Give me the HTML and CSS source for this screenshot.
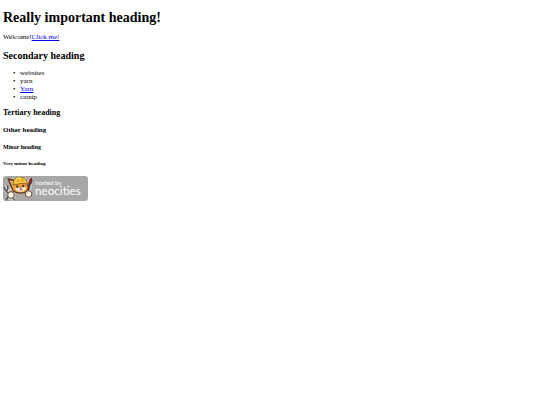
FILE: index.html
```html
<!DOCTYPE html>
<html lang="en">
<head>
    <meta charset="UTF-8">
    <meta name="viewport" content="width=device-width, initial-scale=1.0">
    <title>Really important heading!</title>
    <link rel="stylesheet" href="styles.css">
</head>
<body>

<h1>Really important heading!</h1>
<p>Welcome!<a href="#">Click me!</a></p>

<h2>Secondary heading</h2>
<ul>
    <li>websites</li>
    <li>yarn</li>
    <li><a href="#">Yarn</a></li>
    <li>catnip</li>
</ul>

<h3>Tertiary heading</h3>
<h4>Other heading</h4>
<h5>Minor heading</h5>
<h6>Very minor heading</h6>

<!-- Hosting badge -->
<a class="badge" href="#">
    <svg class="badge-art" viewBox="0 0 255 75" role="img" aria-label="Hosted by Neocities">
        <rect width="255" height="75" rx="9" fill="#a7a7a7"/>
        <!-- White edge behind the cat -->
        <path d="M2 30 L10 28 L18 36 L28 28 L20 8 L38 6 L48 1 L66 3 L74 12 L80 5 L88 3 L90 14 L84 42 L90 53 L84 65 L72 65 L66 52 L36 53 L37 68 L28 75 L12 68 L10 53 L2 44 Z" fill="#cfccc8"/>
        <!-- Wrench -->
        <path d="M3 31 L5 39 L12 48 L23 57 M13 29 L15 37 L11 45" fill="none" stroke="#47484e" stroke-width="4"/>
        <path d="M17 59 L9 73 M29 62 L34 72" stroke="#55504d" stroke-width="4"/>
        <!-- Head -->
        <path d="M27 36 L16 9 L38 14 Q51 6 69 14 L76 30 Q79 44 63 50 Q44 54 31 45 Z" fill="#f19a3b" stroke="#51331f" stroke-width="4"/>
        <path d="M20 14 L35 18 L30 27 Z" fill="#f3b681"/>
        <path d="M36 38 Q43 31 51 36 Q61 28 69 36 Q68 46 54 47 Q41 46 36 38 Z" fill="#fff2dd"/>
        <!-- Helmet -->
        <path d="M31 21 Q31 5 49 3 Q67 2 73 18 L77 24 Q56 19 31 27 Z" fill="#f5c53c" stroke="#654719" stroke-width="2"/>
        <path d="M43 6 L47 19 M56 4 L60 18" stroke="#c9942f" stroke-width="3"/>
        <path d="M39 9 Q46 4 52 6" fill="none" stroke="#ffe99b" stroke-width="3"/>
        <!-- Face -->
        <ellipse cx="43" cy="32" rx="3" ry="4" fill="#33251f"/>
        <ellipse cx="61" cy="30" rx="3" ry="4" fill="#33251f"/>
        <path d="M51 35 L57 35 L54 39 Z M48 41 Q54 46 60 39" fill="#a64330" stroke="#7b3d28" stroke-width="1"/>
        <!-- Brush -->
        <path d="M81 22 L74 49" stroke="#4c2a20" stroke-width="5"/>
        <path d="M78 22 Q77 10 86 5 Q90 14 84 24 Z" fill="#a32828" stroke="#48201f" stroke-width="2"/>
        <!-- Paws -->
        <path d="M29 44 L25 51 M67 42 L73 48" stroke="#d98535" stroke-width="7"/>
        <circle cx="24" cy="57" r="10" fill="#fff9ed" stroke="#644632" stroke-width="3"/>
        <circle cx="77" cy="54" r="10" fill="#fff3e0" stroke="#644632" stroke-width="3"/>
        <text class="badge-small" x="97" y="27">hosted by</text>
        <text class="badge-name" x="96" y="58">neocities</text>
    </svg>
</a>

</body>
</html>
```
FILE: styles.css
```css
body {
    margin: 10px 3px;
    font-family: "Liberation Serif", "Times New Roman", serif;
    font-size: 7px;
    line-height: 8px;
    background-color: white;
    color: black;
}
h1 {
    margin: 0 0 8px;
    font-size: 14px;
    line-height: 15px;
}
p {
    margin: 0 0 9px;
}
h2 {
    margin: 0 0 7px;
    font-size: 10px;
    line-height: 12px;
}
ul {
    margin: 0 0 8px;
    padding-left: 10px;
    list-style: none;
}
li::before {
    content: "•";
    display: inline-block;
    width: 7px;
}
h3, h4, h5 {
    margin: 0 0 9px;
}
h3 {
    font-size: 8px;
}
h4 {
    font-size: 7px;
}
h5 {
    font-size: 6px;
}
h6 {
    margin: 0 0 8px;
    font-size: 5px;
}
a {
    color: #0000ee;
}
.badge {
    display: inline-block;
}
.badge-art {
    display: block;
    width: 85px;
    height: 25px;
}
.badge-small, .badge-name {
    font-family: Lato, sans-serif;
    font-variant-ligatures: none;
    fill: white;
}
.badge-small {
    font-size: 18px;
}
.badge-name {
    font-size: 35px;
}
```
